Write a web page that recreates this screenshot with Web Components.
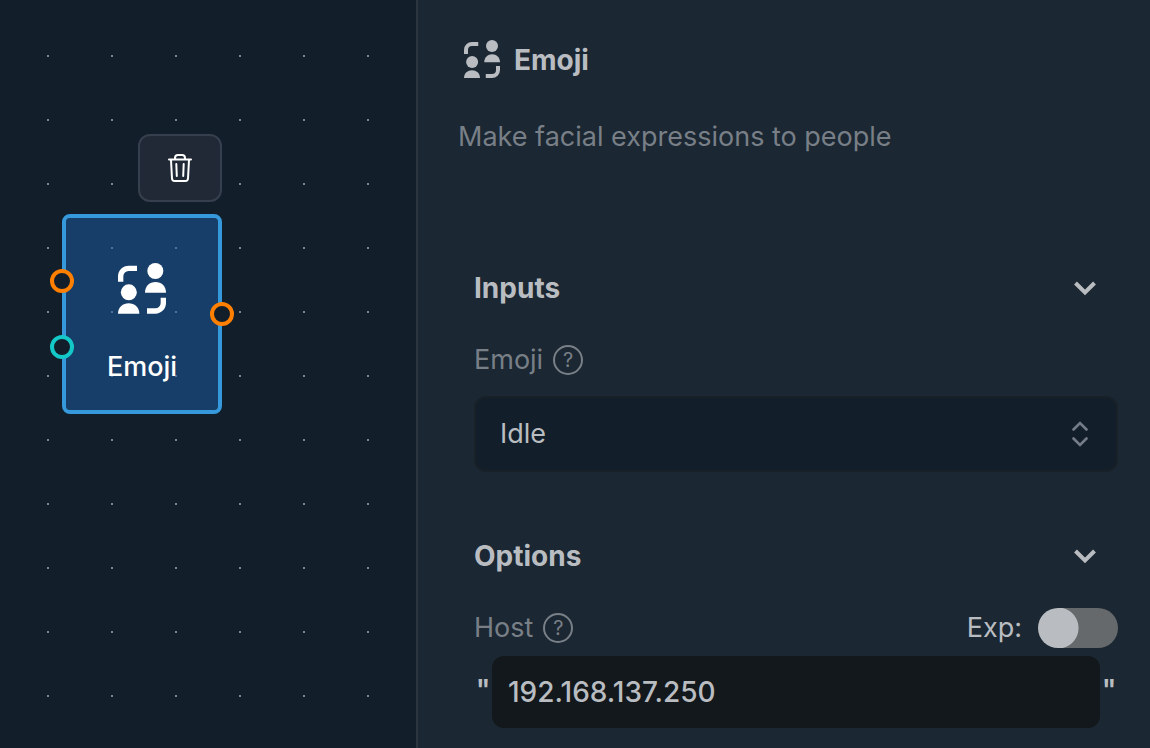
<!DOCTYPE html>
<html lang="en">
<head>
<meta charset="utf-8">
<title>Emoji</title>
<style>
  html, body { height: 100%; }
  body {
    margin: 0;
    background: #121e29;
    color: #b9bdc1;
    font: 400 27px/40px Inter, "Liberation Sans", sans-serif;
  }
</style>
</head>
<body>
<flow-editor>
  <flow-canvas slot="canvas">
    <flow-node name="Emoji"></flow-node>
  </flow-canvas>
  <node-panel slot="panel" name="Emoji">
    <span slot="description">Make facial expressions to people</span>
    <panel-section heading="Inputs">
      <select-field label="Emoji"><option>Idle</option></select-field>
    </panel-section>
    <panel-section heading="Options">
      <text-field label="Host" value="192.168.137.250"></text-field>
    </panel-section>
  </node-panel>
</flow-editor>

<script>
const render = (host, html) => {
  const t = document.createElement('template');
  t.innerHTML = html;
  host.attachShadow({ mode: 'open' }).append(t.content.cloneNode(true));
};

customElements.define('flow-editor', class extends HTMLElement {
  constructor() {
    super();
    render(this, `
      <style>
        :host { display: grid; grid-template-columns: 416px minmax(0, 1fr); height: 100vh; overflow: hidden; }
      </style>
      <slot name="canvas"></slot><slot name="panel"></slot>`);
  }
});

customElements.define('flow-canvas', class extends HTMLElement {
  constructor() {
    super();
    render(this, `
      <style>
        :host {
          display: block; position: relative; overflow: hidden;
          background: conic-gradient(from 270deg at 2px 2px, #7a858f 90deg, transparent 0) 47px 55px / 64px 64px #121e29;
        }
        ::slotted(flow-node) { position: absolute; left: 62px; top: 134px; }
      </style>
      <slot></slot>`);
  }
});

customElements.define('people-icon', class extends HTMLElement {
  constructor() {
    super();
    render(this, `
      <style>
        :host { display: block; }
        svg { display: block; width: 100%; height: 100%; }
      </style>
      <svg viewBox="0 0 144 152" preserveAspectRatio="xMidYMin" fill="currentColor" aria-hidden="true">
        <path d="M0 56V40A32 32 0 0 1 32 8H57V24H32A16 16 0 0 0 16 40V56Z"/>
        <circle cx="112" cy="24" r="24"/>
        <path d="M81 89C81 69 95 57 112.500 57S144 69 144 89Z"/>
        <circle cx="32.500" cy="88" r="24"/>
        <path d="M0 152C0 132 15 121 32 121S64 132 64 152Z"/>
        <path d="M144 104V120A32 32 0 0 1 112 152H87V136H112A16 16 0 0 0 128 120V104Z"/>
      </svg>`);
  }
});

customElements.define('flow-node', class extends HTMLElement {
  constructor() {
    super();
    render(this, `
      <style>
        :host { display: flex; flex-direction: column; align-items: flex-end; gap: 12px; width: 160px; color: #fff; }
        button {
          display: grid; place-items: center; width: 84px; height: 68px; padding: 0;
          box-sizing: border-box; border: 2px solid #363f4d; border-radius: 12px;
          background: #212937; color: #fff;
        }
        .card {
          position: relative; box-sizing: border-box; width: 160px; height: 200px;
          border: 4px solid #3699dc; border-radius: 8px; background: rgba(27, 94, 167, .5);
          background-clip: padding-box;
          display: flex; flex-direction: column; align-items: center; gap: 33px; padding-top: 45px;
        }
        people-icon { width: 48px; height: 51px; }
        .name { font-weight: 500; }
        .port {
          position: absolute; box-sizing: border-box; width: 24px; height: 24px;
          border: 4px solid #ff8000; border-radius: 50%; background: #121e29;
        }
        .in { left: -16px; top: 51px; }
        .in.second { top: 117px; border-color: #14c8c8; }
        .out { right: -16px; top: 84px; }
      </style>
      <button type="button" aria-label="Delete node">
        <svg width="24" height="28" viewBox="0 0 24 28" fill="none" stroke="#fff" stroke-width="2" stroke-linecap="round" stroke-linejoin="round">
          <path d="M1 5.500H23M3 6L4 24.500Q4.200 27 6.500 27H17.500Q19.800 27 20 24.500L21 6M7 5V4Q7 1 10 1H14Q17 1 17 4V5"/>
          <path d="M8.300 10L8.800 22M15.700 10L15.200 22"/>
        </svg>
      </button>
      <div class="card">
        <people-icon></people-icon>
        <span class="name"></span>
        <i class="port in"></i><i class="port in second"></i><i class="port out"></i>
      </div>`);
    this.shadowRoot.querySelector('.name').textContent = this.getAttribute('name');
  }
});

customElements.define('node-panel', class extends HTMLElement {
  constructor() {
    super();
    render(this, `
      <style>
        :host { display: block; border-left: 2px solid #2a353f; background: #1b2732; padding: 36px 32px 20px 40px; overflow: hidden; }
        header { display: flex; align-items: center; gap: 14px; height: 48px; padding-left: 6px; }
        people-icon { width: 36px; height: 40px; }
        h1 { margin: 0; font-size: 28px; line-height: 40px; font-weight: 700; }
        p { margin: 33px 0 0; color: #787f87; }
        .sections { display: grid; gap: 64px; margin: 111px 0 0 16px; }
      </style>
      <header><people-icon></people-icon><h1></h1></header>
      <p><slot name="description"></slot></p>
      <div class="sections"><slot></slot></div>`);
    this.shadowRoot.querySelector('h1').textContent = this.getAttribute('name');
  }
});

customElements.define('panel-section', class extends HTMLElement {
  constructor() {
    super();
    render(this, `
      <style>
        :host { display: block; }
        h2 { margin: 0 0 32px; font-size: 28px; line-height: 40px; }
        button {
          display: flex; align-items: center; justify-content: space-between; width: 100%;
          padding: 0 20px 0 0; border: 0; background: none; color: inherit; font: inherit; font-weight: 700;
        }
      </style>
      <h2><button type="button" aria-expanded="true"><span></span>
        <svg width="26" height="18" viewBox="0 0 26 18" fill="none" stroke="currentColor" stroke-width="4"><path d="M3.500 4L13 13.500L22.500 4"/></svg>
      </button></h2>
      <slot></slot>`);
    this.shadowRoot.querySelector('span').textContent = this.getAttribute('heading');
  }
});

customElements.define('help-button', class extends HTMLElement {
  constructor() {
    super();
    render(this, `
      <style>
        :host { display: block; }
        button {
          display: grid; place-items: center; box-sizing: border-box; width: 30px; height: 30px; padding: 0;
          border: 2px solid currentColor; border-radius: 50%; background: none; color: inherit;
          font: inherit; font-size: 20px; line-height: 26px;
        }
      </style>
      <button type="button" aria-label="Help">?</button>`);
  }
});

customElements.define('select-field', class extends HTMLElement {
  constructor() {
    super();
    render(this, `
      <style>
        :host { display: block; }
        .row { display: flex; align-items: center; gap: 10px; margin-bottom: 16px; color: #787f87; }
        .box { display: grid; align-items: center; }
        select {
          grid-area: 1 / 1; appearance: none; box-sizing: border-box; width: 100%; height: 76px; padding: 0 64px 0 24px;
          border: 2px solid #182028; border-radius: 12px; background: #121e29; color: #b9bdc1; font: inherit;
        }
        svg { grid-area: 1 / 1; justify-self: end; margin-right: 30px; pointer-events: none; color: #737c87; }
      </style>
      <div class="row"><label for="f"></label><help-button></help-button></div>
      <div class="box">
        <select id="f"></select>
        <svg width="16" height="28" viewBox="0 0 16 28" fill="none" stroke="currentColor" stroke-width="2.600" stroke-linecap="round"><path d="M1.500 9.500L8 3L14.500 9.500M1.500 18.500L8 25L14.500 18.500"/></svg>
      </div>`);
    this.shadowRoot.querySelector('label').textContent = this.getAttribute('label');
    this.shadowRoot.querySelector('select').append(...this.children);
  }
});

customElements.define('toggle-switch', class extends HTMLElement {
  constructor() {
    super();
    render(this, `
      <style>
        :host { display: block; color: #b9bdc1; }
        label { display: flex; align-items: center; gap: 16px; }
        input {
          appearance: none; margin: 0; width: 80px; height: 40px; border-radius: 20px;
          background: radial-gradient(circle at 20px 20px, #b9bdc1 20px, transparent 21px) #65696c;
        }
        input:checked { background: radial-gradient(circle at 60px 20px, #b9bdc1 20px, transparent 21px) #3699dc; }
      </style>
      <label><slot></slot><input type="checkbox" role="switch"></label>`);
  }
});

customElements.define('text-field', class extends HTMLElement {
  constructor() {
    super();
    render(this, `
      <style>
        :host { display: block; }
        .row { display: flex; align-items: center; gap: 10px; margin-bottom: 8px; color: #787f87; }
        toggle-switch { margin-left: auto; }
        .box { display: flex; justify-content: space-between; }
        .box span { flex: 0 0 18px; text-align: center; font-size: 28px; font-weight: 600; line-height: 68px; }
        input {
          flex: 1; min-width: 0; box-sizing: border-box; height: 72px; padding: 0 16px; border: 0; border-radius: 12px;
          background: #13181c; color: #b9bdc1; font: inherit; font-size: 28px; font-weight: 500;
        }
      </style>
      <div class="row"><label for="f"></label><help-button></help-button><toggle-switch>Exp:</toggle-switch></div>
      <div class="box"><span>"</span><input id="f" type="text"><span>"</span></div>`);
    this.shadowRoot.querySelector('label').textContent = this.getAttribute('label');
    this.shadowRoot.querySelector('input').value = this.getAttribute('value');
  }
});
</script>
</body>
</html>
